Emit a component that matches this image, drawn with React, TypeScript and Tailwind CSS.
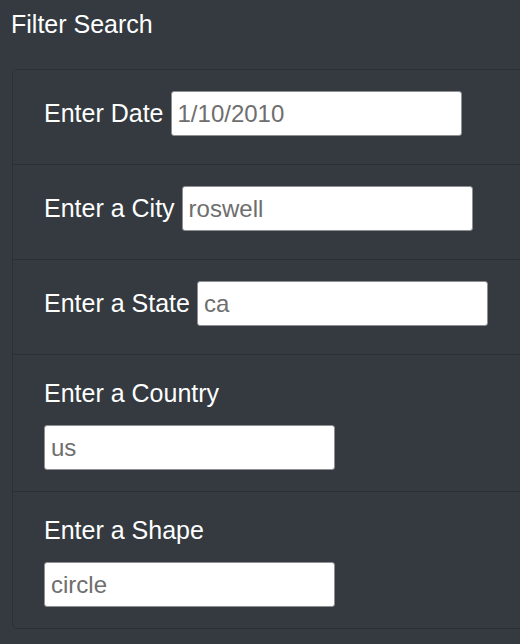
import { useState } from "react";

type Field = {
  label: string;
  value: string;
  stacked?: boolean;
};

const FIELDS: Field[] = [
  { label: "Enter Date", value: "1/10/2010" },
  { label: "Enter a City", value: "roswell" },
  { label: "Enter a State", value: "ca" },
  { label: "Enter a Country", value: "us", stacked: true },
  { label: "Enter a Shape", value: "circle", stacked: true },
];

function FilterRow({ field, last }: { field: Field; last: boolean }) {
  const [value, setValue] = useState(field.value);

  const input = (
    <input
      type="text"
      value={value}
      onChange={(e) => setValue(e.target.value)}
      className="h-[45px] w-[291px] rounded-[3px] border border-[#8d8f92] bg-white px-[6px] text-[24px] text-[#6e6e6e] outline-none"
    />
  );

  if (field.stacked) {
    return (
      <li
        className={`flex flex-col px-[31px] pt-[22px] pb-[21px] ${last ? "" : "border-b border-[#2c3035]"}`}
      >
        <label className="mb-[15px] leading-[33px]">{field.label}</label>
        {input}
      </li>
    );
  }

  return (
    <li className="flex items-center gap-[7px] border-b border-[#2c3035] px-[31px] pt-[21px] pb-[28px]">
      <label className="leading-[33px]">{field.label}</label>
      {input}
    </li>
  );
}

export default function App() {
  return (
    <div className="h-[644px] w-[520px] overflow-hidden bg-[#343a40] font-['Liberation_Sans',Arial,sans-serif] text-[25px] text-white">
      <h2 className="flex h-[50px] items-center pl-[11px] text-[25px] font-normal">
        Filter Search
      </h2>
      <div className="ml-[12px] mt-[19px] w-[560px] rounded-[5px] border border-[#2c3035]">
        <ul>
          {FIELDS.map((f, i) => (
            <FilterRow key={f.label} field={f} last={i === FIELDS.length - 1} />
          ))}
        </ul>
      </div>
    </div>
  );
}
